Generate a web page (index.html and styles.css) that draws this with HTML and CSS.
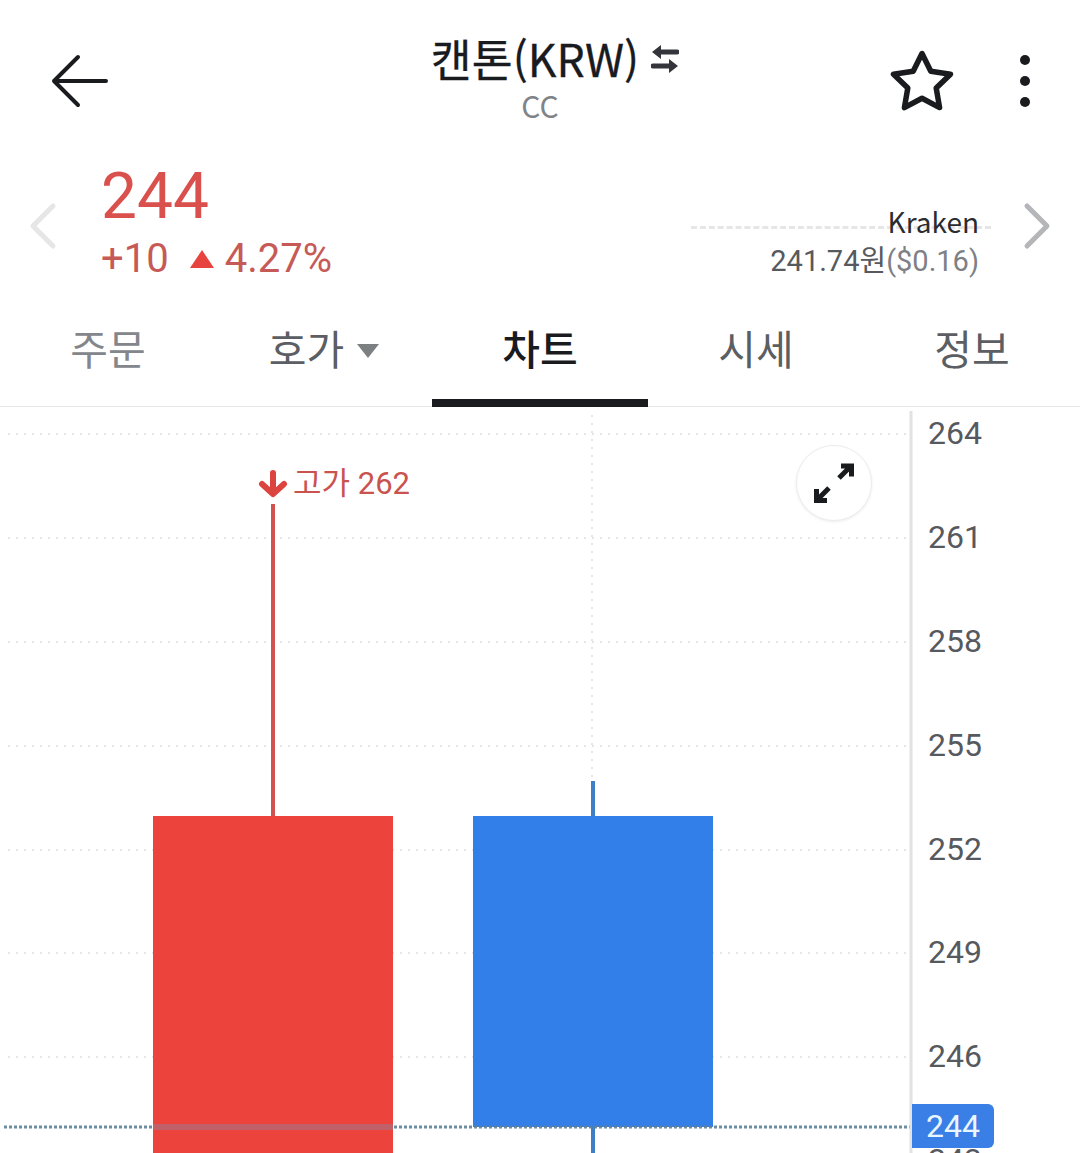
FILE: index.html

```html
<!DOCTYPE html>
<html lang="ko">
<head>
  <meta charset="UTF-8">
  <title>캔톤(KRW)</title>
  <link rel="stylesheet" href="styles.css">
</head>
<body>

<div class="topbar">
  <svg class="back" width="60" height="54" viewBox="0 0 60 54">
    <path d="M28 3 L4 27 L28 51 M4 27 H56" />
  </svg>
  <div class="title">
    <div class="title-row">
      <span class="title-name">캔톤(KRW)</span>
      <svg class="swap" width="28" height="30" viewBox="0 0 28 30">
        <path class="swap-line" d="M8 8 H26 M2 22 H20" />
        <path class="swap-head" d="M1 8 L10 1 V15 Z M27 22 L18 15 V29 Z" />
      </svg>
    </div>
    <div class="title-code">CC</div>
  </div>
  <div class="top-actions">
    <svg class="star" width="64" height="62" viewBox="0 0 64 62">
      <path d="M32 3.500 L40.800 21.300 L60.500 24.200 L46.200 38 L49.600 57.600 L32 48.300 L14.400 57.600 L17.800 38 L3.500 24.200 L23.200 21.300 Z" />
    </svg>
    <svg class="more" width="12" height="56" viewBox="0 0 12 56">
      <circle cx="6" cy="6" r="5" />
      <circle cx="6" cy="27" r="5" />
      <circle cx="6" cy="48" r="5" />
    </svg>
  </div>
</div>

<div class="price-row">
  <svg class="chev chev-prev" width="28" height="48" viewBox="0 0 28 48">
    <path d="M24 4 L4 24 L24 44" />
  </svg>
  <div class="price">
    <div class="price-now">244</div>
    <div class="price-change">
      <span>+10</span>
      <span class="up-mark"></span>
      <span>4.27%</span>
    </div>
  </div>
  <div class="market">
    <div class="market-line"></div>
    <div class="market-name">Kraken</div>
    <div class="market-price">241.74원<span class="market-usd">($0.16)</span></div>
  </div>
  <svg class="chev chev-next" width="28" height="48" viewBox="0 0 28 48">
    <path d="M4 4 L24 24 L4 44" />
  </svg>
</div>

<div class="tabs">
  <div class="tab tab-light">주문</div>
  <div class="tab">호가<span class="tab-caret"></span></div>
  <div class="tab tab-active">차트</div>
  <div class="tab">시세</div>
  <div class="tab">정보</div>
</div>

<div class="chart">
  <svg class="chart-draw" width="1080" height="746" viewBox="0 0 1080 746">
    <g class="grid">
      <path d="M8 27 H908 M8 131 H908 M8 235 H908 M8 339 H908 M8 443 H908 M8 546 H908 M8 650 H908" />
      <path d="M592 8 V746" />
    </g>
    <rect class="wick-red" x="271" y="97" width="4" height="312" />
    <rect class="body-red" x="153" y="409" width="240" height="337" />
    <rect class="wick-blue" x="591" y="374" width="4" height="372" />
    <rect class="body-blue" x="473" y="409" width="240" height="311" />
    <path class="now-line" d="M4 720 H910" />
    <rect class="now-band" x="153" y="717" width="240" height="6" />
    <rect class="axis-line" x="909.500" y="4" width="3" height="742" />
  </svg>

  <div class="high-label">
    <svg width="30" height="28" viewBox="0 0 30 28">
      <path d="M15 3 V23 M4 14 L15 24 L26 14" />
    </svg>
    <span>고가 262</span>
  </div>

  <div class="expand">
    <svg width="44" height="44" viewBox="0 0 44 44">
      <path d="M27 17 L38 6 M29 5 H39.500 V15.500 M17 27 L6 38 M4.500 28 V39.500 H15" />
    </svg>
  </div>

  <div class="axis">
    <span>264</span>
    <span>261</span>
    <span>258</span>
    <span>255</span>
    <span>252</span>
    <span>249</span>
    <span>246</span>
    <span>243</span>
  </div>
  <div class="now-tag">244</div>
</div>

</body>
</html>
```

FILE: styles.css

```css
body {
  margin: 0;
  width: 1080px;
  height: 1153px;
  overflow: hidden;
  background-color: #fff;
  font-family: "Noto Sans CJK KR", "Noto Sans", sans-serif;
  color: #1a1b1f;
}

.topbar {
  display: grid;
  grid-template-columns: 1fr auto 1fr;
  align-items: start;
  height: 150px;
  padding: 0 50px;
  box-sizing: border-box;
}

.back {
  margin-top: 54px;
  fill: none;
  stroke: #1a1b1f;
  stroke-width: 4;
  stroke-linecap: round;
  stroke-linejoin: round;
}

.title {
  margin-top: 31px;
  text-align: center;
}

.title-row {
  display: flex;
  align-items: center;
  height: 54px;
  padding-left: 30px;
}

.title-name {
  font-size: 44.500px;
  line-height: 54px;
  -webkit-text-stroke: 0.3px #1a1b1f;
}

.swap {
  margin-left: 12px;
  margin-top: 1px;
}

.swap-line {
  fill: none;
  stroke: #33353a;
  stroke-width: 5;
  stroke-linecap: round;
}

.swap-head {
  fill: #33353a;
}

.title-code {
  margin-top: 3px;
  font-size: 30px;
  line-height: 34px;
  color: #808488;
}

.top-actions {
  display: flex;
  justify-content: flex-end;
  align-items: flex-start;
  gap: 65px;
  margin-top: 50px;
  margin-right: -1px;
}

.star {
  fill: none;
  stroke: #1a1b1f;
  stroke-width: 5.500;
  stroke-linejoin: round;
}

.more {
  margin-top: 4px;
  fill: #1a1b1f;
}

.price-row {
  display: flex;
  align-items: flex-start;
  height: 147px;
  padding-left: 29px;
  padding-right: 29px;
  box-sizing: border-box;
}

.chev {
  margin-top: 52px;
  fill: none;
  stroke-width: 5;
  stroke-linecap: round;
  stroke-linejoin: round;
}

.chev-prev {
  stroke: #e6e6e6;
}

.chev-next {
  stroke: #b5b6b9;
}

.price {
  margin-left: 44px;
  font-family: Roboto, sans-serif;
  color: #d9504c;
}

.price-now {
  font-size: 64px;
  line-height: 72px;
  margin-top: 11px;
}

.price-change {
  display: flex;
  align-items: center;
  margin-top: 4px;
  font-size: 40px;
  line-height: 44px;
  color: #c65a56;
}

.up-mark {
  width: 0;
  height: 0;
  margin: 0 11px 0 21px;
  border-left: 12px solid transparent;
  border-right: 12px solid transparent;
  border-bottom: 18px solid #e7433f;
}

.market {
  position: relative;
  flex: 1;
  margin-top: 52px;
  margin-right: 44px;
  text-align: right;
}

.market-line {
  position: absolute;
  top: 24px;
  right: -12px;
  width: 300px;
  border-top: 3px dashed #e6e6e6;
}

.market-name {
  position: relative;
  font-size: 28px;
  line-height: 38px;
  color: #2a2c30;
}

.market-price {
  margin-top: 2px;
  font-size: 29px;
  line-height: 38px;
  font-family: Roboto, "Noto Sans CJK KR", sans-serif;
  color: #56595e;
}

.market-usd {
  color: #7d8186;
}

.tabs {
  display: grid;
  grid-template-columns: repeat(5, 216px);
  height: 110px;
  box-sizing: border-box;
  border-bottom: 1px solid #e6e6e6;
}

.tab {
  display: flex;
  justify-content: center;
  align-items: flex-start;
  padding-top: 21px;
  font-size: 41px;
  line-height: 58px;
  color: #5b5e63;
}

.tab-light {
  color: #83878b;
}

.tab-active {
  height: 110px;
  box-sizing: border-box;
  border-bottom: 8px solid #1a1b1f;
  color: #1a1b1f;
  font-weight: 500;
}

.tab-caret {
  width: 0;
  height: 0;
  margin: 26px 0 0 13px;
  border-left: 11px solid transparent;
  border-right: 11px solid transparent;
  border-top: 14px solid #7c8083;
}

.chart {
  position: relative;
  height: 746px;
  overflow: hidden;
}

.chart-draw {
  display: block;
}

.grid path {
  fill: none;
  stroke: #e6e6e6;
  stroke-width: 2;
  stroke-dasharray: 2 6;
}

.wick-red {
  fill: #d2524f;
}

.body-red {
  fill: #ec433c;
}

.wick-blue {
  fill: #3f7fc7;
}

.body-blue {
  fill: #337fea;
}

.now-line {
  fill: none;
  stroke: #5d8296;
  stroke-width: 3;
  stroke-dasharray: 3 2;
  opacity: 0.9;
}

.now-band {
  fill: #c0616a;
}

.axis-line {
  fill: #e2e2e2;
}

.high-label {
  position: absolute;
  left: 258px;
  top: 56px;
  display: flex;
  align-items: center;
  gap: 5px;
  font-size: 31px;
  line-height: 42px;
  font-family: Roboto, "Noto Sans CJK KR", sans-serif;
  color: #c9534f;
}

.high-label svg {
  fill: none;
  stroke: #dc4440;
  stroke-width: 6;
  stroke-linecap: round;
  stroke-linejoin: round;
}

.expand {
  position: absolute;
  left: 796px;
  top: 38px;
  width: 76px;
  height: 76px;
  display: flex;
  align-items: center;
  justify-content: center;
  box-sizing: border-box;
  background-color: #fff;
  border: 1px solid #ededed;
  border-radius: 50%;
  box-shadow: 0 1px 3px rgba(0,0,0,0.08);
}

.expand svg {
  fill: none;
  stroke: #1a1b1f;
  stroke-width: 5;
}

.axis {
  position: absolute;
  left: 928px;
  top: 0;
  display: flex;
  flex-direction: column;
  font-family: Roboto, sans-serif;
  font-size: 32px;
  line-height: 52px;
  color: #56595e;
}

.axis span {
  height: 52px;
  margin-bottom: 51.900px;
}

.now-tag {
  position: absolute;
  left: 912px;
  top: 697px;
  width: 82px;
  height: 44px;
  background-color: #3a7fe6;
  border-radius: 0 6px 6px 0;
  font-family: Roboto, sans-serif;
  font-size: 32px;
  line-height: 44px;
  text-align: center;
  color: #eaf6ff;
}
```
